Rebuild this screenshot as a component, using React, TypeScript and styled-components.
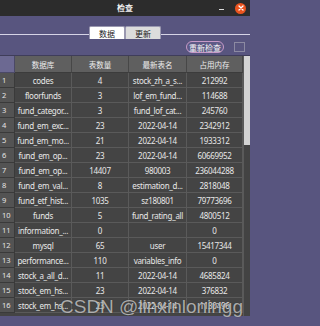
import styled, { createGlobalStyle } from 'styled-components';

type Row = [string, string, string, string];

const rows: Row[] = [
  ['codes', '4', 'stock_zh_a_s...', '212992'],
  ['floorfunds', '3', 'lof_em_fund...', '114688'],
  ['fund_categor...', '3', 'fund_lof_cat...', '245760'],
  ['fund_em_exc...', '23', '2022-04-14', '2342912'],
  ['fund_em_mo...', '21', '2022-04-14', '1933312'],
  ['fund_em_op...', '23', '2022-04-14', '60669952'],
  ['fund_em_op...', '14407', '980003', '236044288'],
  ['fund_em_val...', '8', 'estimation_d...', '2818048'],
  ['fund_etf_hist...', '1035', 'sz180801', '79773696'],
  ['funds', '5', 'fund_rating_all', '4800512'],
  ['information_...', '0', '', '0'],
  ['mysql', '65', 'user', '15417344'],
  ['performance...', '110', 'variables_info', '0'],
  ['stock_a_all_d...', '11', '2022-04-14', '4685824'],
  ['stock_em_hs...', '23', '2022-04-14', '376832'],
  ['stock_em_hs...', '23', '2022-04-14', '1130496'],
];

const headers = ['数据库', '表数量', '最新表名', '占用内存'];

const GlobalStyle = createGlobalStyle`
  html, body {
    margin: 0;
    padding: 0;
    background: #58557f;
  }
`;

export default function App() {
  return (
    <Window>
      <GlobalStyle />
      <TitleBar>
        <span />
        <Title>检查</Title>
        <Controls>
          <Minimize />
          <Close>
            <svg width="6" height="6" viewBox="0 0 6 6">
              <path d="M1 1L5 5M5 1L1 5" stroke="#fff" strokeWidth="1.3" strokeLinecap="round" />
            </svg>
          </Close>
        </Controls>
      </TitleBar>
      <TabArea>
        <TabRow>
          <Tab $active>数据</Tab>
          <Tab>更新</Tab>
        </TabRow>
        <Toolbar>
          <RecheckButton>重新检查</RecheckButton>
          <CheckBox />
        </Toolbar>
      </TabArea>
      <TableArea>
        <Table>
          <Corner />
          {headers.map((h) => (
            <HeaderCell key={h}>{h}</HeaderCell>
          ))}
          {rows.map((r, i) => (
            <RowFrag key={i} index={i + 1} row={r} />
          ))}
        </Table>
        <ScrollBar>
          <Thumb />
        </ScrollBar>
      </TableArea>
      <BottomStrip />
      <Watermark>CSDN @linxinloningg</Watermark>
    </Window>
  );
}

function RowFrag({ index, row }: { index: number; row: Row }) {
  return (
    <>
      <RowNumber>{index}</RowNumber>
      {row.map((v, j) => (
        <Cell key={j}>{v}</Cell>
      ))}
    </>
  );
}

const Window = styled.div`
  position: relative;
  width: 250px;
  height: 326px;
  display: flex;
  flex-direction: column;
  overflow: hidden;
  background: #58557f;
  font-family: "Noto Sans", "Noto Sans CJK SC", sans-serif;
`;

const TitleBar = styled.div`
  height: 16px;
  flex: none;
  display: grid;
  grid-template-columns: 1fr auto 1fr;
  align-items: center;
  background: #2c2c2c;
`;

const Title = styled.div`
  color: #f2f2f2;
  font-size: 8px;
  line-height: 16px;
  font-weight: 700;
  font-family: "Noto Sans CJK SC", sans-serif;
`;

const Controls = styled.div`
  display: flex;
  justify-content: flex-end;
  align-items: center;
  gap: 11px;
  padding-right: 4px;
`;

const Minimize = styled.div`
  width: 5px;
  height: 1px;
  margin-top: 2px;
  background: #dcdcdc;
`;

const Close = styled.div`
  width: 11px;
  height: 11px;
  border-radius: 50%;
  background: #e9541f;
  display: flex;
  align-items: center;
  justify-content: center;
`;

const TabArea = styled.div`
  height: 40px;
  flex: none;
  display: flex;
  flex-direction: column;
  background: #58557f;
  border-bottom: 1px solid #3f3d5a;
  box-sizing: border-box;
`;

const TabRow = styled.div`
  display: flex;
  justify-content: center;
  align-items: flex-end;
  padding-top: 10px;
  height: 23px;
  flex: none;
  box-sizing: border-box;
  background: linear-gradient(
    to bottom,
    transparent 18px,
    #d6d4e6 18px,
    #d6d4e6 19px,
    transparent 19px
  );
`;

const Tab = styled.div<{ $active?: boolean }>`
  width: 36px;
  height: 13px;
  box-sizing: border-box;
  display: flex;
  align-items: center;
  justify-content: center;
  font-size: 8px;
  font-family: "Noto Sans CJK SC", sans-serif;
  color: #222;
  background: ${({ $active }) => ($active ? '#ffffff' : '#dcdcdc')};
  border: 1px solid #9a98b0;
  border-bottom: none;
  border-radius: 2px 2px 0 0;
`;

const Toolbar = styled.div`
  flex: 1;
  display: flex;
  justify-content: flex-end;
  align-items: center;
  gap: 10px;
  padding-right: 5px;
`;

const RecheckButton = styled.div`
  width: 38px;
  height: 12px;
  box-sizing: border-box;
  display: flex;
  align-items: center;
  justify-content: center;
  border: 1px solid #c79ac8;
  border-radius: 6px;
  background: #5e5a86;
  color: #f4f4f4;
  font-size: 8px;
  font-family: "Noto Sans CJK SC", sans-serif;
`;

const CheckBox = styled.div`
  width: 9px;
  height: 8px;
  border: 1px solid #8c8aa2;
  background: #5a5780;
`;

const TableArea = styled.div`
  height: 260px;
  flex: none;
  display: flex;
  overflow: hidden;
  background: #3f3f3f;
`;

const Table = styled.div`
  width: 243px;
  flex: none;
  display: grid;
  grid-template-columns: 15px 57px 57px 58px 56px;
  grid-template-rows: 17px;
  grid-auto-rows: 15px;
  align-content: start;
  background: #444444;
`;

const Corner = styled.div`
  background: #6c6992;
  border-right: 1px solid #4b4966;
  border-bottom: 1px solid #4b4966;
`;

const HeaderCell = styled.div`
  background: #5f5f5f;
  color: #ececec;
  font-size: 7.5px;
  font-family: "Noto Sans CJK SC", sans-serif;
  display: flex;
  align-items: center;
  justify-content: center;
  border-right: 1px solid #474747;
  border-bottom: 1px solid #3c3c3c;
`;

const RowNumber = styled.div`
  background: #535353;
  color: #e4e4e4;
  font-size: 7.5px;
  display: flex;
  align-items: center;
  padding-left: 2px;
  border-right: 1px solid #3a3a3a;
  border-bottom: 1px solid #3a3a3a;
`;

const Cell = styled.div`
  background: #444444;
  color: #e8e8e8;
  font-size: 8px;
  letter-spacing: -0.3px;
  white-space: nowrap;
  overflow: hidden;
  display: flex;
  align-items: center;
  justify-content: center;
  border-right: 1px solid #5a5a5a;
  border-bottom: 1px solid #5a5a5a;
`;

const ScrollBar = styled.div`
  width: 7px;
  flex: none;
  display: flex;
  flex-direction: column;
  background: #434343;
  border-left: 1px solid #5a5a5a;
  box-sizing: border-box;
`;

const Thumb = styled.div`
  height: 89px;
  background: #d3d3d3;
`;

const BottomStrip = styled.div`
  height: 10px;
  flex: none;
  background: #58557f;
`;

const Watermark = styled.div`
  position: absolute;
  left: 60px;
  top: 296px;
  font-family: "Liberation Sans", Arial, sans-serif;
  font-size: 19px;
  color: rgba(225, 225, 225, 0.72);
  text-shadow: 0 0 1px rgba(0, 0, 0, 0.6);
  white-space: nowrap;
  pointer-events: none;
`;
